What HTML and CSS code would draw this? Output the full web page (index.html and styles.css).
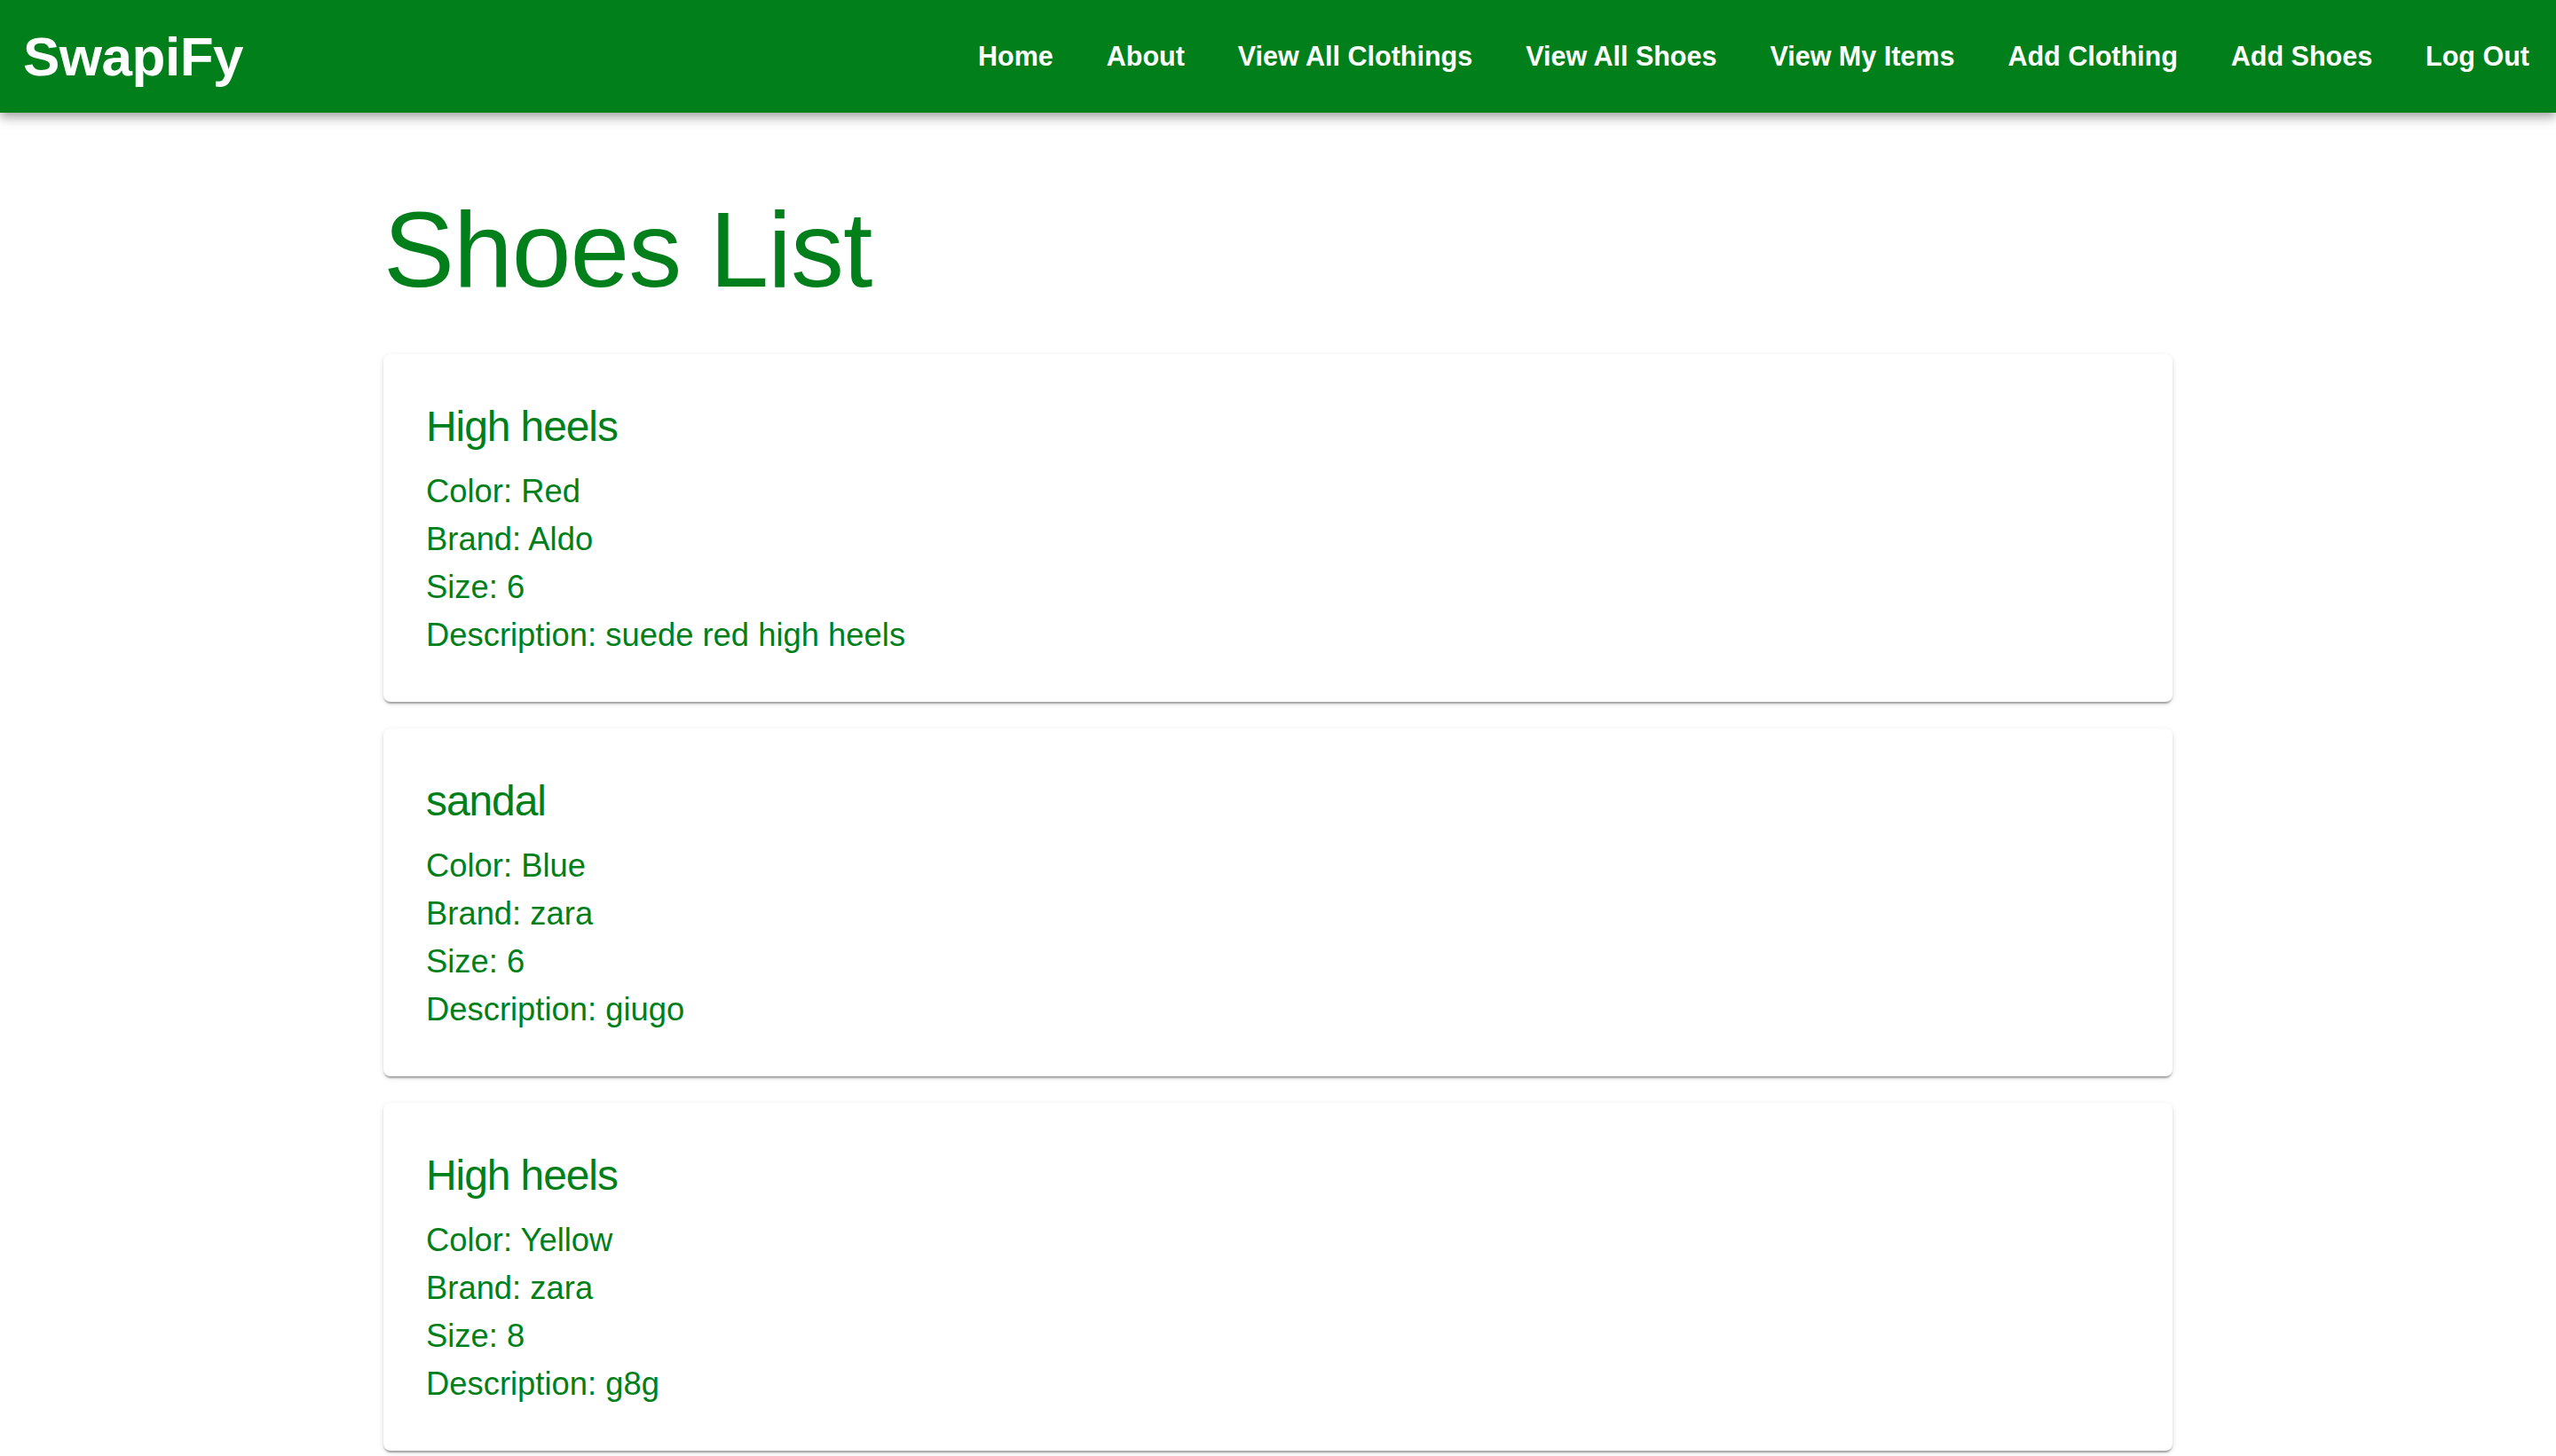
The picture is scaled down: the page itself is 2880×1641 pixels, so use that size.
FILE: index.html
```html
<!DOCTYPE html>
<html lang="en">
<head>
<meta charset="utf-8">
<title>SwapiFy - Shoes List</title>
<link rel="stylesheet" href="styles.css">
</head>
<body>
<header class="appbar">
  <div class="logo">SwapiFy</div>
  <nav class="nav">
    <a class="nav-link" href="#">Home</a>
    <a class="nav-link" href="#">About</a>
    <a class="nav-link" href="#">View All Clothings</a>
    <a class="nav-link" href="#">View All Shoes</a>
    <a class="nav-link" href="#">View My Items</a>
    <a class="nav-link" href="#">Add Clothing</a>
    <a class="nav-link" href="#">Add Shoes</a>
    <a class="nav-link" href="#">Log Out</a>
  </nav>
</header>
<main class="container">
  <h1 class="page-title">Shoes List</h1>
  <div class="card-list">
    <section class="card">
      <h2 class="card-title">High heels</h2>
      <p class="card-line">Color: Red</p>
      <p class="card-line">Brand: Aldo</p>
      <p class="card-line">Size: 6</p>
      <p class="card-line">Description: suede red high heels</p>
    </section>
    <section class="card">
      <h2 class="card-title">sandal</h2>
      <p class="card-line">Color: Blue</p>
      <p class="card-line">Brand: zara</p>
      <p class="card-line">Size: 6</p>
      <p class="card-line">Description: giugo</p>
    </section>
    <section class="card">
      <h2 class="card-title">High heels</h2>
      <p class="card-line">Color: Yellow</p>
      <p class="card-line">Brand: zara</p>
      <p class="card-line">Size: 8</p>
      <p class="card-line">Description: g8g</p>
    </section>
  </div>
</main>
</body>
</html>
```

FILE: styles.css
```css
* { box-sizing: border-box; }

html, body {
  margin: 0;
  padding: 0;
  background: #ffffff;
  font-family: "Liberation Sans", Arial, Helvetica, sans-serif;
  color: #007f1a;
}

.appbar {
  height: 127px;
  background: #007f1a;
  color: #ffffff;
  display: flex;
  align-items: center;
  justify-content: space-between;
  padding: 0 30px 0 26px;
  box-shadow: 0 4px 8px -2px rgba(0,0,0,0.2), 0 8px 10px 0 rgba(0,0,0,0.14), 0 2px 20px 0 rgba(0,0,0,0.12);
  position: relative;
  z-index: 1;
}

.logo {
  font-size: 62px;
  font-weight: 700;
  line-height: 1;
  letter-spacing: -0.5px;
}

.nav {
  display: flex;
  align-items: center;
  gap: 60px;
}

.nav-link {
  color: #ffffff;
  text-decoration: none;
  font-size: 30.5px;
  font-weight: 700;
  line-height: 1;
}

.container {
  width: 2016px;
  margin: 0 auto;
  padding-bottom: 60px;
}

.page-title {
  margin: 82px 0 46px;
  font-size: 120px;
  line-height: 144px;
  font-weight: 400;
  letter-spacing: -1px;
  color: #007f1a;
}

.card-list {
  display: flex;
  flex-direction: column;
  gap: 30px;
}

.card {
  background: #ffffff;
  border-radius: 8px;
  padding: 50px 48px 48px;
  box-shadow: 0 4px 2px -2px rgba(0,0,0,0.2), 0 2px 2px 0 rgba(0,0,0,0.14), 0 2px 6px 0 rgba(0,0,0,0.12);
}

.card-title {
  margin: 0 0 14px;
  font-size: 48px;
  line-height: 64px;
  font-weight: 400;
  letter-spacing: -1.1px;
  color: #007f1a;
}

.card-line {
  margin: 0;
  font-size: 36.4px;
  line-height: 54px;
  color: #007f1a;
}
```
